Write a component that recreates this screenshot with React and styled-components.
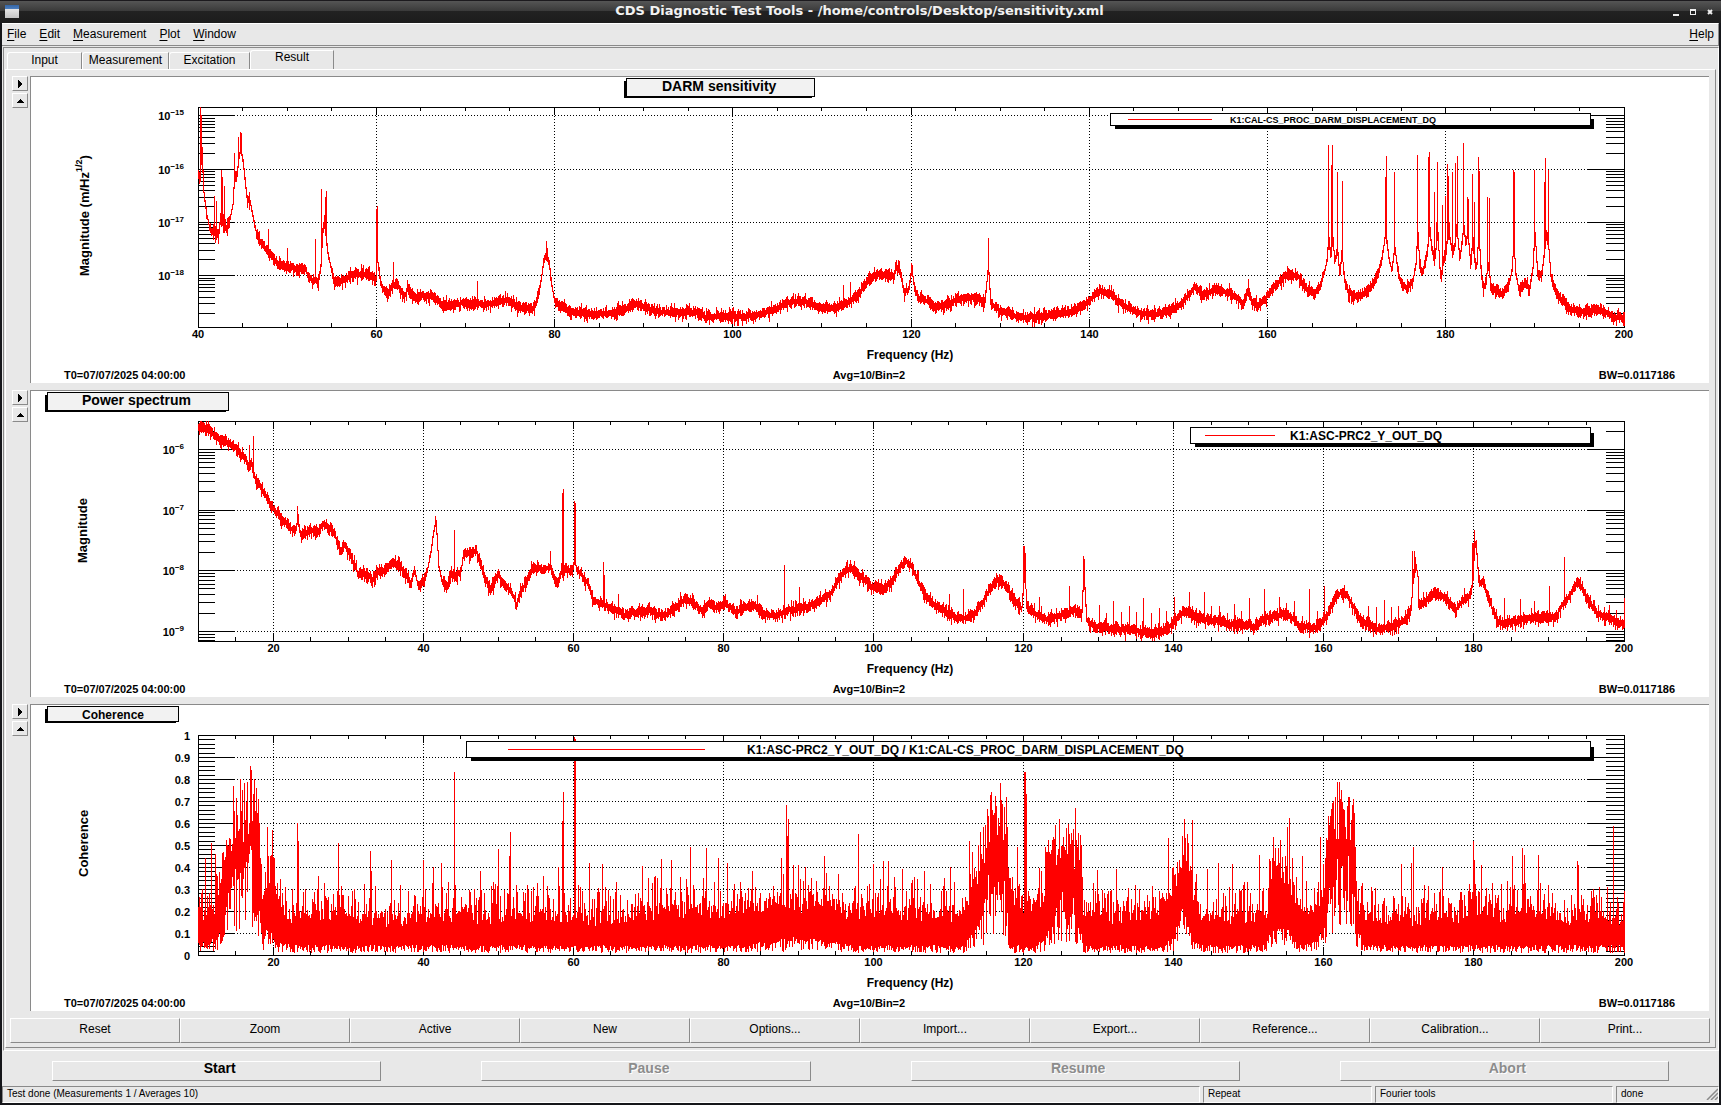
import React, { useMemo, useState } from "react";
import styled, { createGlobalStyle } from "styled-components";

const GlobalStyle = createGlobalStyle`
  * {
    box-sizing: border-box;
  }

  body {
    margin: 0;
    background: #15161a;
    color: #000;
    font-family: "Liberation Sans", Arial, sans-serif;
    font-size: 12px;
  }

  button {
    margin: 0;
    padding: 0;
    border: 0;
    background: none;
    color: inherit;
    font: inherit;
  }
`;

const face = "#e8e8e8";
const light = "#ffffff";
const dark = "#8a8a8a";

const Window = styled.div`
  display: flex;
  flex-direction: column;
  min-height: 100vh;
  background: #15161a;
`;

const TitleBar = styled.header`
  display: grid;
  grid-template-columns: 60px 1fr 60px;
  align-items: center;
  height: 23px;
  padding: 0 7px 0 5px;
  border-top: 1px solid #1c1a1e;
  background: linear-gradient(#555 0, #3a3a3a 10px, #222 10px, #1c1c1c 100%);
`;

const TitleText = styled.h1`
  margin: 0;
  padding-bottom: 3px;
  text-align: center;
  color: #f2f2f2;
  font: bold 13px/16px "DejaVu Sans", sans-serif;
  white-space: nowrap;
`;

const AppIcon = styled.span`
  width: 14px;
  height: 13px;
  margin-bottom: 2px;
  background: linear-gradient(#3465a4 0, #4d7fc0 4px, #e6e6e6 4px, #c4c4c4 100%);
`;

const WindowButtons = styled.div`
  display: flex;
  justify-content: flex-end;
  gap: 10px;

  button {
    display: flex;
  }
`;

const Body = styled.div`
  display: flex;
  flex-direction: column;
  flex: 1;
  margin: 0 2px 2px;
  background: ${face};
`;

const MenuBar = styled.nav`
  display: flex;
  align-items: center;
  gap: 13px;
  height: 23px;
  margin-bottom: 1px;
  padding: 0 4px 2px 5px;
  border: solid;
  border-width: 1px 1px 1px 0;
  border-color: ${light} ${dark} ${dark};
`;

const MenuItem = styled.button`
  margin-left: ${({ $end }) => ($end ? "auto" : 0)};
  line-height: 16px;

  u {
    text-underline-offset: 2px;
  }
`;

const Frame = styled.main`
  display: flex;
  flex-direction: column;
  flex: 1;
  margin-left: 1px;
  padding: 2px 2px 2px 1px;
  border: 1px solid;
  border-color: ${dark} ${light} ${light} ${dark};
`;

const Tabs = styled.div`
  display: flex;
  align-items: flex-end;
  height: 19px;
  padding-left: 2px;
`;

const Tab = styled.button`
  width: ${({ $width }) => $width}px;
  height: ${({ $active }) => ($active ? 20 : 17)}px;
  margin-bottom: ${({ $active }) => ($active ? -1 : 0)}px;
  padding-bottom: ${({ $active }) => ($active ? 6 : 2)}px;
  border: solid;
  border-width: 1px 1px 0;
  border-color: ${light} ${dark} ${light} ${light};
  border-top-left-radius: 3px;
  background: ${face};
  line-height: 13px;
`;

const Panel = styled.section`
  flex: 1;
  border: 1px solid;
  border-color: ${light} ${dark} ${dark} ${light};
`;

const PlotList = styled.div`
  display: flex;
  flex-direction: column;
  gap: 7px;
  padding: 6px 6px 0;
`;

const PlotRow = styled.article`
  display: flex;
  align-items: flex-start;
  gap: 2px;
`;

const PadButtons = styled.div`
  display: flex;
  flex-direction: column;
  gap: 2px;
`;

const PadButton = styled.button`
  display: flex;
  align-items: center;
  justify-content: center;
  width: 16px;
  height: 15px;
  border: 1px solid;
  border-color: ${light} ${dark} ${dark} ${light};
`;

const Pad = styled.div`
  flex: 1;
  min-width: 0;
  border: solid ${dark};
  border-width: 1px 0 0 1px;
  background: #fff;
`;

const Canvas = styled.svg`
  display: block;
  width: 100%;
  height: auto;
  font-family: "Liberation Sans", Arial, sans-serif;
  font-weight: bold;
`;

const Toolbar = styled.div`
  display: flex;
  margin: 7px 5px 4px 4px;
`;

const ToolButton = styled.button`
  flex: 1;
  height: 25px;
  padding-bottom: 4px;
  border: 1px solid;
  border-color: ${light} ${dark} ${dark} ${light};
`;

const Controls = styled.div`
  display: flex;
  padding: 10px 0 5px;
`;

const ControlButton = styled.button`
  flex: 1;
  height: 20px;
  margin: 0 50px;
  padding: 0 0 6px 6px;
  border: 1px solid;
  border-color: ${light} ${dark} ${dark} ${light};
  font-size: 14px;
  font-weight: bold;
  line-height: 12px;

  &:disabled {
    color: #8c8c8c;
    text-shadow: 1px 1px 0 #fff;
  }
`;

const StatusBar = styled.footer`
  display: grid;
  grid-template-columns: 1198fr 169fr 238fr 103fr;
  gap: 3px;
  height: 17px;
`;

const StatusCell = styled.div`
  display: flex;
  justify-content: space-between;
  align-items: center;
  padding: 0 0 1px 4px;
  border: 1px solid;
  border-color: ${dark} ${light} ${light} ${dark};
  font-size: 10px;
  line-height: 12px;
  white-space: nowrap;
`;

// Plot frame inside the pad, in pad units
const PAD_W = 1678;
const PAD_H = 306;
const LEFT = 167;
const TOP = 30;
const W = 1426;
const H = 220;

const random = (seed) => () => {
  seed = (seed + 0x6d2b79f5) | 0;
  let t = Math.imul(seed ^ (seed >>> 15), 1 | seed);
  t = (t + Math.imul(t ^ (t >>> 7), 61 | t)) ^ t;
  return ((t ^ (t >>> 14)) >>> 0) / 4294967296;
};

// Linear interpolation of column k in a table sorted by its first column
const interpolate = (table, x, k = 1) => {
  let i = 1;
  while (i < table.length - 1 && table[i][0] < x) i++;
  const a = table[i - 1];
  const b = table[i];
  const t = Math.min(1, Math.max(0, (x - a[0]) / (b[0] - a[0])));
  return a[k] + (b[k] - a[k]) * t;
};

const pairs = (text) =>
  text
    .trim()
    .split(/\s+/)
    .map((p) => p.split(",").map(Number));

const column = (x, y1, y2) => {
  const a = Math.max(0, Math.round(y1));
  const b = Math.min(H, Math.max(a + 2, Math.round(y2)));
  return `M${LEFT + x + 0.5} ${TOP + a}V${TOP + b}`;
};

const spectrumPath = ({ base, spikes, seed }) => {
  const rand = random(seed);
  const tops = new Map();
  spikes.forEach(([x, y]) => tops.set(Math.round(x), y));
  let prev = interpolate(base, 0);
  let d = "";
  for (let x = 0; x <= W; x++) {
    const c = interpolate(base, x);
    const steep = Math.abs(c - prev) > 4 ? 0.4 : 1;
    let y1 = c - (2 + 4 * rand() + 5 * rand() ** 4) * steep;
    let y2 = c + (2 + 4 * rand() + 6 * rand() ** 4) * steep;
    y1 = Math.min(y1, prev);
    y2 = Math.max(y2, prev);
    if (tops.has(x)) y1 = Math.min(y1, tops.get(x));
    d += column(x, y1, y2);
    prev = c;
  }
  return d;
};

const coherencePath = ({ base, spikes, seed }) => {
  const rand = random(seed);
  const tops = new Map();
  spikes.forEach(([x, v]) => tops.set(Math.round(x), v));
  let d = "";
  for (let x = 0; x <= W; x++) {
    const lo = interpolate(base, x, 1);
    const body = interpolate(base, x, 2);
    const hi = interpolate(base, x, 3);
    let v = body * (0.78 + 0.4 * rand()) + (hi - body) * rand() ** 2.2;
    v = Math.min(v, hi);
    if (tops.has(x)) v = Math.max(v, tops.get(x));
    const low = lo * (0.3 + 1.2 * rand());
    d += column(x, H * (1 - v), H * (1 - low));
  }
  return d;
};

const darm = {
  seed: 7,
  base: pairs(`
    0,65 1,75 3,40 5,85 8,108 11,121 14,125 17,127 20,127 22,108 25,117 28,121 31,113 34,98 36,66 38,70
    40,52 42,42 44,52 46,70 48,90 51,93 54,108 58,128 63,138 68,142 73,148 78,156 85,158 92,160 100,163
    107,160 109,169 113,173 120,173 122,160 124,122 126,118 129,145 133,164 136,175 143,174 150,170
    157,168 165,167 172,169 177,174 178,150 180,160 181,170 184,182 190,187 194,177 200,178 206,190 209,182
    213,186 218,191 222,188 234,190 245,198 268,196 288,198 301,193 311,194 319,200 336,201 340,188
    343,168 345,153 348,147 350,153 353,178 356,195 361,198 371,204 396,207 415,206 429,201 438,196
    448,201 462,205 496,205 508,210 545,209 562,208 574,203 587,196 601,194 612,196 622,201 637,201
    651,195 661,186 670,173 678,168 688,168 695,169 698,160 702,165 705,184 710,183 713,162 715,176
    719,190 728,194 738,201 753,195 765,190 778,191 786,196 789,165 790,165 792,196 802,204 819,210
    844,210 860,206 872,204 880,202 891,193 901,184 914,188 920,195 930,201 943,206 955,208 972,203
    982,197 990,188 996,180 1005,188 1017,182 1030,186 1038,191 1045,197 1050,183 1054,195 1059,199
    1067,191 1075,181 1084,171 1092,167 1100,170 1109,183 1115,186 1121,181 1125,168 1128,155 1130,130
    1132,150 1134,130 1136,155 1139,145 1141,168 1143,145 1146,174 1150,186 1158,190 1167,186 1173,179
    1179,168 1183,153 1187,125 1190,150 1193,164 1196,140 1199,163 1202,175 1208,182 1214,175 1217,158
    1219,125 1221,160 1224,166 1228,150 1231,120 1233,143 1236,152 1239,125 1241,160 1243,168 1245,150
    1247,148 1249,125 1251,130 1254,148 1256,140 1258,120 1261,152 1263,138 1265,118 1267,138 1269,125
    1272,158 1274,130 1276,155 1278,158 1280,125 1282,158 1284,180 1287,178 1289,155 1290,158 1292,180
    1298,185 1304,187 1310,178 1313,165 1315,135 1317,166 1320,182 1327,176 1331,182 1334,162 1336,125
    1339,168 1343,168 1346,142 1348,125 1350,142 1352,167 1356,181 1362,191 1370,202 1383,205 1403,203
    1412,209 1426,211`),
  spikes: pairs(`
    2,0 3,8 16,89 18,94 23,63 24,70 26,79 36,46 40,30 42,25 43,26 53,138 70,122 89,141 117,132 123,82
    128,84 127,90 126,108 179,99 178,102 195,155 279,174 348,134 645,178 652,175 698,153 700,153 713,156 714,158
    790,131 1050,172 1130,38 1134,38 1133,58 1139,65 1144,74 1188,49 1187,70 1196,65 1219,48 1231,45
    1230,50 1236,85 1239,55 1238,115 1244,98 1247,89 1249,57 1250,69 1251,115 1254,65 1257,56 1259,49
    1265,36 1269,90 1270,92 1274,67 1276,95 1280,50 1281,64 1289,90 1291,91 1315,63 1316,65 1336,63
    1347,51 1346,75 1350,63`),
};

const power = {
  seed: 23,
  base: pairs(`
    0,5 9,8 16,14 22,19 32,22 39,29 47,39 50,45 53,43 56,55 62,66 70,80 78,92 85,99 93,108 97,110
    99,98 102,114 106,112 112,109 118,112 125,104 129,104 135,110 139,122 142,130 146,124 151,131
    156,144 160,154 166,152 174,158 181,150 187,149 194,141 202,146 208,155 212,163 216,149 219,164
    223,163 228,152 232,132 234,117 237,100 238,112 240,145 244,162 249,165 253,152 258,155 262,151
    265,132 271,132 278,130 282,142 286,155 291,168 296,162 300,152 305,163 313,171 318,184 322,170
    328,162 333,149 338,146 345,149 352,145 356,159 359,163 363,151 368,149 374,149 376,138 378,149
    384,154 391,165 395,180 402,182 409,186 420,190 425,195 438,191 452,190 464,195 475,189 482,181
    490,179 497,184 504,190 511,182 518,187 527,183 538,192 547,185 557,185 563,193 577,195 591,189
    609,186 620,180 632,174 639,160 647,150 654,147 661,154 668,160 675,167 686,168 693,160 700,149
    707,139 714,147 720,160 727,174 736,184 745,189 756,196 765,197 775,194 784,182 791,168 797,160
    802,159 809,167 816,180 823,187 826,150 828,185 838,194 848,198 861,195 870,192 877,189 883,192
    885,150 888,199 897,206 905,207 930,209 957,212 970,208 977,198 986,190 996,195 1009,199 1022,200
    1031,204 1057,205 1068,197 1083,193 1092,196 1101,205 1116,207 1123,200 1129,194 1135,180
    1142,172 1149,175 1157,189 1164,202 1179,208 1198,204 1207,199 1212,190 1215,150 1217,143
    1219,155 1220,185 1227,180 1236,171 1246,177 1257,189 1264,180 1272,174 1274,160 1276,120
    1278,132 1280,160 1285,162 1290,177 1296,194 1301,202 1316,201 1331,197 1346,196 1357,197
    1364,183 1372,174 1379,160 1385,169 1390,180 1398,192 1409,197 1426,204`),
  spikes: pairs(`
    51,24 55,15 99,85 100,93 237,95 238,99 256,109 352,130 365,68 364,72 376,80 377,82 405,141 406,154 420,173
    586,144 601,166 559,174 525,175 511,176 751,173 765,168 825,125 826,125 827,132 841,176 871,165 885,135 886,138
    901,184 908,192 915,180 923,191 931,185 938,191 945,177 953,192 961,187 968,190 976,176 991,171
    1006,171 1013,185 1021,185 1029,192 1036,183 1043,190 1051,177 1066,168 1081,176 1088,182 1096,180 1111,168
    1119,190 1126,165 1170,185 1178,186 1186,179 1193,186 1200,185 1214,130 1216,130 1217,136 1266,167
    1274,122 1275,122 1276,109 1278,119 1285,155 1306,177 1322,178 1336,180 1351,165 1366,136 1396,179
    1411,184 1418,189 1426,177`),
};

// x, lower edge, body, reach of the ordinary spikes
const coherence = {
  seed: 41,
  base: [
    [0, 0.05, 0.17, 0.3], [12, 0.05, 0.18, 0.38], [20, 0.06, 0.25, 0.45], [26, 0.12, 0.4, 0.55],
    [30, 0.2, 0.5, 0.64], [37, 0.27, 0.6, 0.78], [44, 0.25, 0.62, 0.76], [48, 0.3, 0.66, 0.8],
    [52, 0.5, 0.74, 0.86], [56, 0.32, 0.68, 0.78], [60, 0.2, 0.6, 0.72], [63, 0.1, 0.32, 0.5],
    [65, 0.03, 0.2, 0.35], [70, 0.12, 0.38, 0.58], [76, 0.08, 0.34, 0.55], [80, 0.04, 0.2, 0.35],
    [100, 0.03, 0.17, 0.33], [200, 0.03, 0.16, 0.32], [300, 0.03, 0.18, 0.34], [402, 0.03, 0.16, 0.32],
    [450, 0.03, 0.2, 0.36], [540, 0.03, 0.2, 0.34], [583, 0.05, 0.23, 0.38], [600, 0.06, 0.24, 0.38],
    [660, 0.03, 0.2, 0.36], [764, 0.03, 0.18, 0.35], [772, 0.06, 0.3, 0.5], [784, 0.12, 0.42, 0.62],
    [788, 0.24, 0.56, 0.72], [798, 0.36, 0.63, 0.74], [804, 0.3, 0.62, 0.75], [808, 0.18, 0.5, 0.72],
    [811, 0.03, 0.28, 0.42], [820, 0.03, 0.22, 0.38], [835, 0.03, 0.22, 0.4], [846, 0.05, 0.28, 0.48],
    [855, 0.12, 0.45, 0.58], [862, 0.2, 0.51, 0.62], [875, 0.18, 0.5, 0.61], [883, 0.07, 0.44, 0.56],
    [885, 0.03, 0.19, 0.33], [960, 0.03, 0.17, 0.31], [975, 0.05, 0.25, 0.42], [982, 0.16, 0.4, 0.54],
    [990, 0.12, 0.41, 0.55], [996, 0.05, 0.25, 0.38], [1005, 0.03, 0.17, 0.33], [1068, 0.03, 0.17, 0.33],
    [1072, 0.1, 0.37, 0.53], [1084, 0.1, 0.42, 0.55], [1092, 0.08, 0.34, 0.5], [1100, 0.03, 0.18, 0.33],
    [1118, 0.05, 0.22, 0.38], [1127, 0.09, 0.38, 0.58], [1133, 0.28, 0.56, 0.68], [1141, 0.34, 0.63, 0.76],
    [1150, 0.33, 0.61, 0.72], [1156, 0.2, 0.5, 0.66], [1159, 0.09, 0.25, 0.38], [1166, 0.03, 0.16, 0.31],
    [1300, 0.03, 0.17, 0.33], [1325, 0.03, 0.2, 0.37], [1360, 0.03, 0.16, 0.31], [1426, 0.03, 0.17, 0.31],
  ],
  spikes: pairs(`
    7,.44 13,.51 17,.46 35,.77 42,.8 52,.86 53,.84 56,.8 58,.76 69,.58 74,.57 99,.6 100,.52 120,.36
    140,.51 172,.475 173,.38 193,.43 225,.43 235,.4 243,.42 256,.83 282,.38 300,.48 311,.45 312,.56 345,.36
    360,.4 364,.61 365,.74 376,.99 377,.98 391,.42 404,.415 444,.405 463,.435 473,.43 492,.49 508,.485
    520,.44 529,.42 554,.38 583,.44 588,.68 589,.54 590,.62 595,.41 600,.41 607,.4 626,.45 660,.55 675,.415
    685,.425 690,.425 704,.39 726,.38 752,.4 771,.52 793,.74 802,.78 808,.71 819,.49 826,.83 827,.83
    828,.73 861,.62 877,.67 899,.385 918,.39 970,.53 986,.62 994,.615 1009,.39 1020,.42 1034,.415
    1061,.455 1089,.58 1091,.625 1104,.45 1122,.535 1139,.785 1141,.785 1143,.75 1151,.72 1155,.71 1203,.415
    1213,.42 1215,.49 1244,.4 1275,.52 1276,.43 1283,.41 1314,.45 1324,.485 1326,.455 1340,.455 1379,.425
    1380,.41 1415,.585 1426,.29`),
};

const logAxis = (first, firstExp, perDecade) => {
  const major = [];
  const minor = [];
  for (let n = -1; n < 5; n++) {
    const y = Math.round(first + n * perDecade);
    if (y > 0 && y < H) major.push({ y, exp: firstExp - n });
    for (let m = 2; m < 10; m++) {
      const my = Math.round(first + n * perDecade - Math.log10(m) * perDecade);
      if (my > 0 && my < H) minor.push(my);
    }
  }
  return { major, minor };
};

// Labelled lines every 0.1, short ticks every 0.02
const linearAxis = () => {
  const major = Array.from({ length: 11 }, (_, i) => ({ y: H - i * 22, text: String(i / 10) }));
  const minor = [];
  for (let i = 1; i < 50; i++) {
    if (i % 5 !== 0) minor.push(Math.round(H - (i * H) / 50));
  }
  return { major, minor };
};

const plots = [
  {
    id: "darm",
    title: "DARM sensitivity",
    titleBox: { x: 595, w: 188, h: 18, size: 14, text: 631 },
    yTitle: "Magnitude (m/Hz",
    yPower: "1/2",
    yTitleAt: [58, 199],
    from: 40,
    axis: logAxis(8.4, -15, 53.3),
    path: () => spectrumPath(darm),
    legend: { x: 1079, h: 12, line: [1097, 1181], text: 1199, size: 9, label: "K1:CAL-CS_PROC_DARM_DISPLACEMENT_DQ" },
  },
  {
    id: "power",
    title: "Power spectrum",
    titleBox: { x: 16, w: 181, h: 18, size: 14, text: 51 },
    yTitle: "Magnitude",
    yTitleAt: [56, 172],
    from: 10,
    axis: logAxis(28, -6, 60.6),
    path: () => spectrumPath(power),
    legend: { x: 1159, h: 16, line: [1174, 1244], text: 1259, size: 12, label: "K1:ASC-PRC2_Y_OUT_DQ" },
  },
  {
    id: "coherence",
    title: "Coherence",
    titleBox: { x: 16, w: 131, h: 15, size: 12, text: 51 },
    yTitle: "Coherence",
    yTitleAt: [57, 172],
    from: 10,
    axis: linearAxis(),
    path: () => coherencePath(coherence),
    legend: {
      x: 435,
      h: 16,
      line: [477, 674],
      text: 716,
      size: 12,
      label: "K1:ASC-PRC2_Y_OUT_DQ / K1:CAL-CS_PROC_DARM_DISPLACEMENT_DQ",
    },
  },
];

const xTicks = (from) => {
  const ticks = [];
  for (let f = from + 5; f < 200; f += 5) {
    ticks.push({ f, x: LEFT + Math.floor(((f - from) / (200 - from)) * W) + 0.5, major: f % 20 === 0 });
  }
  return ticks;
};

function Plot({ plot }) {
  const { titleBox, legend, axis, from } = plot;
  const trace = useMemo(() => plot.path(), [plot]);
  const ticks = xTicks(from);
  const labels = ticks.filter((t) => t.major).map(({ f, x }) => ({ f, x }));
  if (from % 20 === 0) labels.unshift({ f: from, x: LEFT });
  labels.push({ f: 200, x: LEFT + W });
  const right = LEFT + W;
  const bottom = TOP + H;
  const legendRight = 1559;

  return (
    <Canvas viewBox={`0 0 ${PAD_W} ${PAD_H}`} aria-label={plot.title}>
      <g stroke="#000" strokeDasharray="1 2" shapeRendering="crispEdges">
        {ticks
          .filter((t) => t.major)
          .map((t) => (
            <path key={t.f} d={`M${t.x} ${TOP}V${bottom}`} />
          ))}
        {axis.major.map(({ y }) => (
          <path key={y} d={`M${LEFT} ${TOP + y + 0.5}H${right}`} />
        ))}
      </g>

      <g stroke="#000" fill="none" shapeRendering="crispEdges">
        {axis.major.map(({ y }) => (
          <path key={y} d={`M${LEFT} ${TOP + y + 0.5}h36M${right} ${TOP + y + 0.5}h-36`} />
        ))}
        {axis.minor.map((y) => (
          <path key={y} d={`M${LEFT} ${TOP + y + 0.5}h17M${right} ${TOP + y + 0.5}h-18`} />
        ))}
        {ticks.map(({ f, x, major }) => (
          <path key={f} d={`M${x} ${TOP}v${major ? 8 : 4}M${x} ${bottom}v${major ? -8 : -4}`} />
        ))}
        <rect x={LEFT + 0.5} y={TOP + 0.5} width={W} height={H} />
      </g>

      <path d={trace} stroke="#f00" fill="none" shapeRendering="crispEdges" />

      <g shapeRendering="crispEdges">
        <rect x={titleBox.x - 2} y="4" width={titleBox.w} height={titleBox.h - 1} />
        <rect x={titleBox.x + 0.5} y="1.5" width={titleBox.w} height={titleBox.h} fill="#f2f2f2" stroke="#000" />
        <rect x={legend.x + 5} y="42" width={legendRight - legend.x - 1} height={legend.h - 2} />
        <rect
          x={legend.x + 0.5}
          y="36.5"
          width={legendRight - legend.x}
          height={legend.h}
          fill="#fff"
          stroke="#000"
        />
        <path d={`M${legend.line[0]} ${36.5 + legend.h / 2}H${legend.line[1]}`} stroke="#f00" />
      </g>
      <text x={titleBox.text} y="14" fontSize={titleBox.size}>
        {plot.title}
      </text>
      <text x={legend.text} y={legend.size === 9 ? 46 : 49} fontSize={legend.size}>
        {legend.label}
      </text>

      <g fontSize="11">
        {axis.major.map(({ y, exp, text }) =>
          text ? (
            <text key={y} x="159" y={TOP + y + 5} textAnchor="end">
              {text}
            </text>
          ) : (
            <text key={y} x="153" y={TOP + y + 5} textAnchor="end">
              10
              <tspan dy="-5" fontSize="8">
                {`−${-exp}`}
              </tspan>
            </text>
          )
        )}
        {labels.map(({ f, x }) => (
          <text key={f} x={x} y="261" textAnchor="middle">
            {f}
          </text>
        ))}
        <text x="33" y="302">
          T0=07/07/2025 04:00:00
        </text>
        <text x="838" y="302" textAnchor="middle">
          Avg=10/Bin=2
        </text>
        <text x="1644" y="302" textAnchor="end">
          BW=0.0117186
        </text>
      </g>
      <text x="879" y="282" textAnchor="middle" fontSize="12">
        Frequency (Hz)
      </text>
      <text transform={`translate(${plot.yTitleAt.join(" ")}) rotate(-90)`} fontSize="13">
        {plot.yTitle}
        {plot.yPower && (
          <>
            <tspan dy="-7" fontSize="9">
              {plot.yPower}
            </tspan>
            <tspan dy="7">)</tspan>
          </>
        )}
      </text>
    </Canvas>
  );
}

const menus = ["File", "Edit", "Measurement", "Plot", "Window", "Help"];

const tabs = [
  { label: "Input", width: 75 },
  { label: "Measurement", width: 87 },
  { label: "Excitation", width: 81 },
  { label: "Result", width: 84 },
];

const tools = [
  "Reset",
  "Zoom",
  "Active",
  "New",
  "Options...",
  "Import...",
  "Export...",
  "Reference...",
  "Calibration...",
  "Print...",
];

export default function App() {
  const [tab, setTab] = useState("Result");

  return (
    <Window>
      <GlobalStyle />
      <TitleBar>
        <AppIcon />
        <TitleText>CDS Diagnostic Test Tools - /home/controls/Desktop/sensitivity.xml</TitleText>
        <WindowButtons>
          <button aria-label="Minimize">
            <svg width="7" height="7">
              <path d="M0 5h6v2H0z" fill="#eee" />
            </svg>
          </button>
          <button aria-label="Maximize">
            <svg width="7" height="7" shapeRendering="crispEdges">
              <path d="M0 0h6v6H0zM1 2v3h4V2z" fill="#eee" fillRule="evenodd" />
            </svg>
          </button>
          <button aria-label="Close">
            <svg width="7" height="7">
              <path d="M1 1l4 4M5 1l-4 4" stroke="#eee" strokeWidth="2" />
            </svg>
          </button>
        </WindowButtons>
      </TitleBar>

      <Body>
        <MenuBar>
          {menus.map((name) => (
            <MenuItem key={name} $end={name === "Help"}>
              <u>{name[0]}</u>
              {name.slice(1)}
            </MenuItem>
          ))}
        </MenuBar>

        <Frame>
          <Tabs role="tablist">
            {tabs.map(({ label, width }) => (
              <Tab
                key={label}
                role="tab"
                aria-selected={tab === label}
                $active={tab === label}
                $width={width}
                onClick={() => setTab(label)}
              >
                {label}
              </Tab>
            ))}
          </Tabs>

          <Panel>
            <PlotList>
              {plots.map((plot) => (
                <PlotRow key={plot.id}>
                  <PadButtons>
                    <PadButton aria-label="Show options">
                      <svg width="4" height="8" shapeRendering="crispEdges">
                        <path d="M0 0l4 4-4 4z" />
                      </svg>
                    </PadButton>
                    <PadButton aria-label="Move up">
                      <svg width="8" height="4" shapeRendering="crispEdges">
                        <path d="M0 4l4-4 4 4z" />
                      </svg>
                    </PadButton>
                  </PadButtons>
                  <Pad>
                    <Plot plot={plot} />
                  </Pad>
                </PlotRow>
              ))}
            </PlotList>
            <Toolbar>
              {tools.map((name) => (
                <ToolButton key={name}>{name}</ToolButton>
              ))}
            </Toolbar>
          </Panel>
        </Frame>

        <Controls>
          <ControlButton>Start</ControlButton>
          <ControlButton disabled>Pause</ControlButton>
          <ControlButton disabled>Resume</ControlButton>
          <ControlButton disabled>Abort</ControlButton>
        </Controls>

        <StatusBar>
          <StatusCell>Test done (Measurements 1 / Averages 10)</StatusCell>
          <StatusCell>Repeat</StatusCell>
          <StatusCell>Fourier tools</StatusCell>
          <StatusCell>
            done
            <svg width="12" height="12" stroke={dark} strokeWidth="1.5">
              <path d="M1 12L12 1M5 12l7-7M9 12l3-3" />
            </svg>
          </StatusCell>
        </StatusBar>
      </Body>
    </Window>
  );
}
